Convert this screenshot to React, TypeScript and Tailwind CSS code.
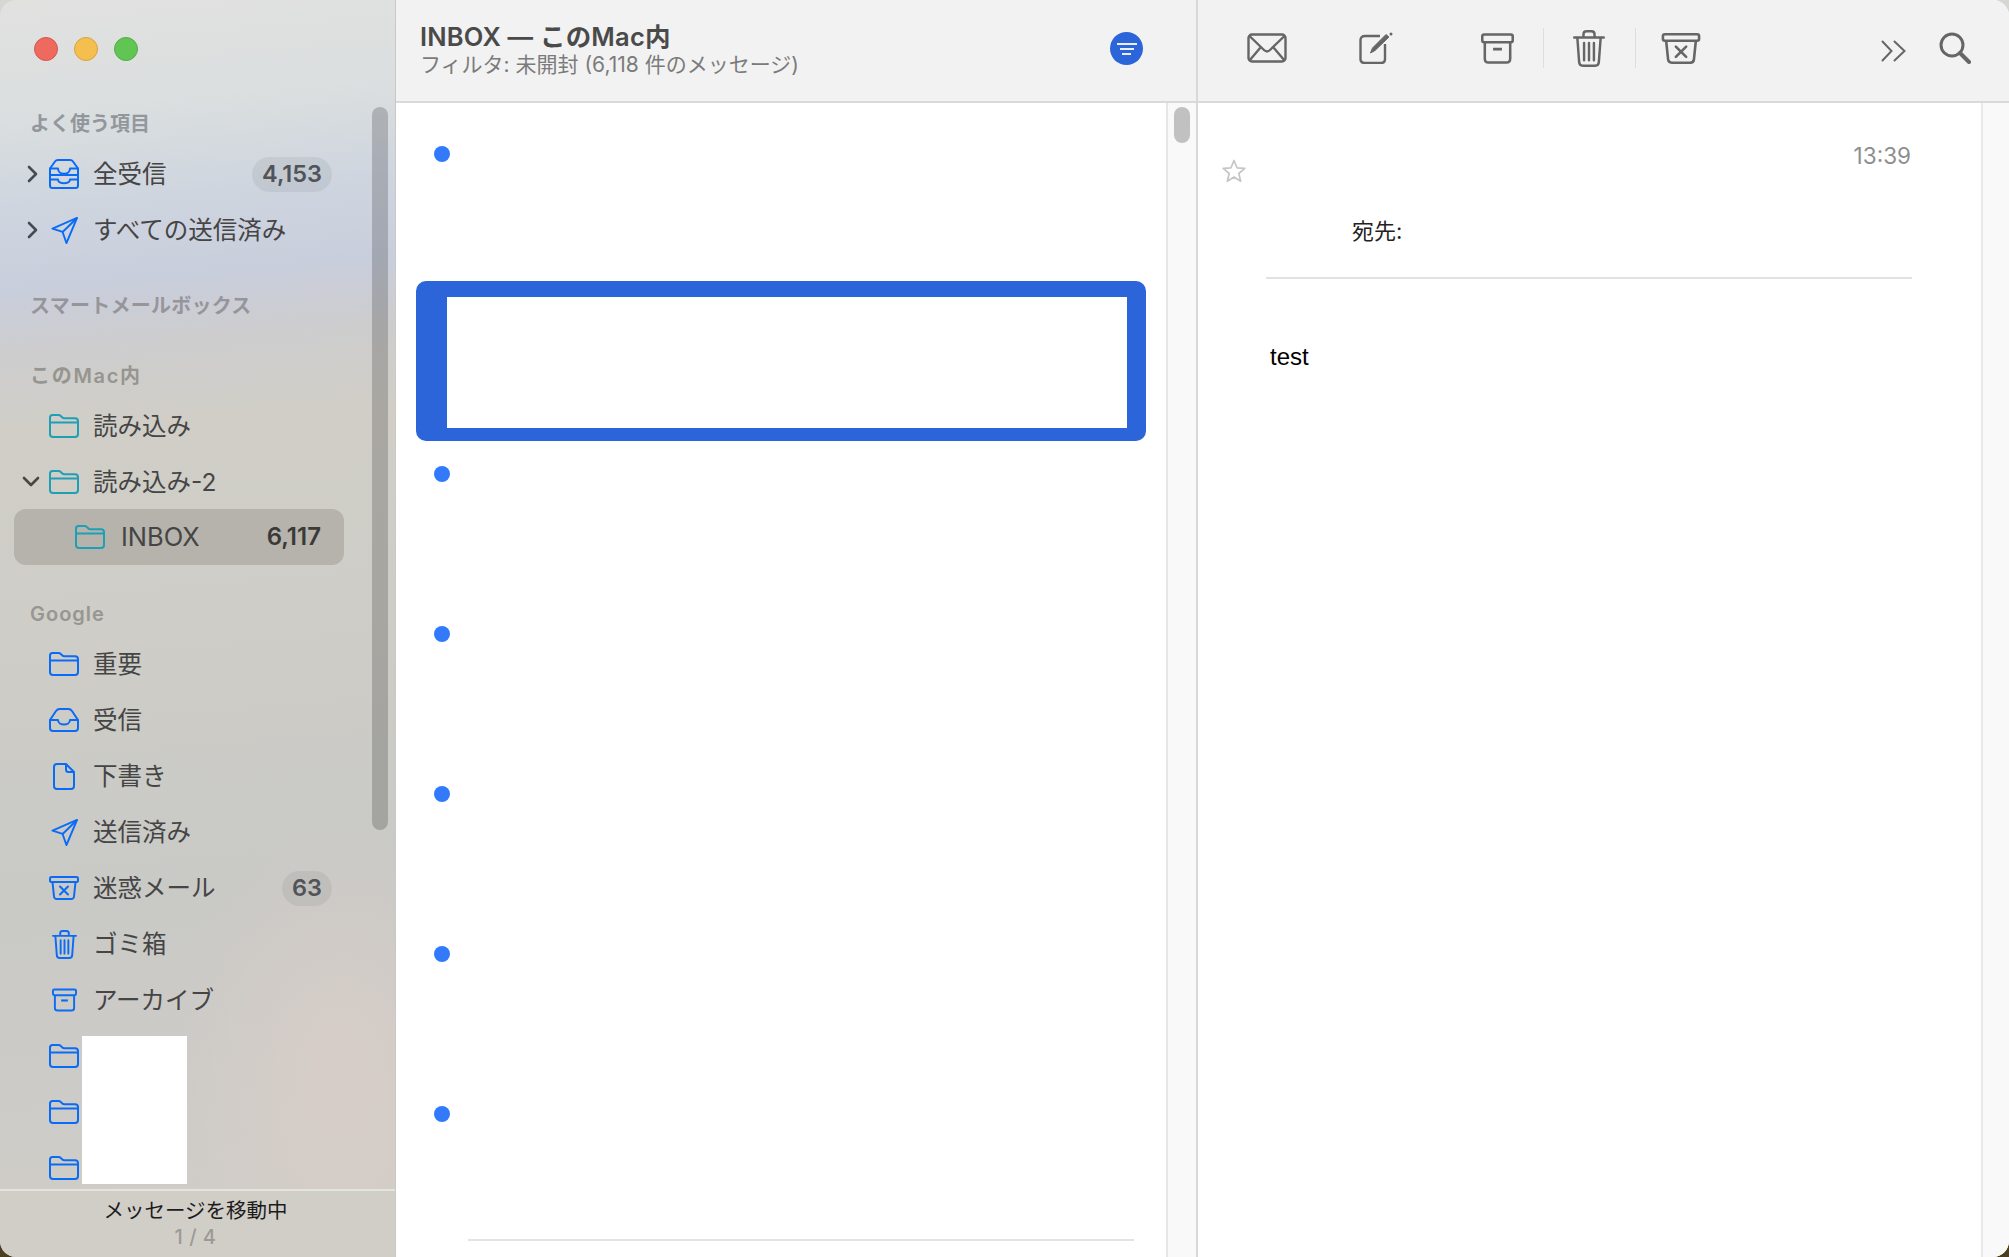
import { ReactNode } from 'react';

const FONT = "font-['Inter','Noto_Sans_CJK_JP',sans-serif]";

function Folder({ className }: { className: string }) {
  return (
    <svg viewBox="0 0 30 24" className={`h-[24px] w-[30px] ${className}`} fill="none" stroke="currentColor" strokeWidth="2">
      <path d="M1 5V3.500C1 2 2 1 3.500 1h6c1 0 1.600.3 2.300 1l1.700 1.600c.5.4 1 .6 1.700.6H26c1.900 0 3 1 3 3V20c0 2-1.100 3-3 3H4c-2 0-3-1-3-3V5Z" strokeLinejoin="round" />
      <path d="M1 8.500h28" />
    </svg>
  );
}

function AllInbox() {
  return (
    <svg viewBox="0 0 30 30" className="h-[30px] w-[30px] text-[#0a6cf5]" fill="none" stroke="currentColor" strokeWidth="2" strokeLinejoin="round">
      <path d="M1 9.500 6 2.500C6.700 1.500 7.500 1 8.800 1h12.400c1.300 0 2.100.5 2.800 1.500l5 7" />
      <path d="M1 9.500h8c0 7 12 7 12 0h8v6.500H1V9.500Z" />
      <path d="M1 16v10.500C1 28 2 29 3.500 29h23c1.500 0 2.500-1 2.500-2.500V16" />
      <path d="M1 20.500h8c0 5 12 5 12 0h8" />
    </svg>
  );
}

function Tray() {
  return (
    <svg viewBox="0 0 30 24" className="h-[24px] w-[30px] text-[#0a6cf5]" fill="none" stroke="currentColor" strokeWidth="2" strokeLinejoin="round">
      <path d="M1 12 7 3C8 1.600 9 1 10.500 1h9c1.500 0 2.500.6 3.500 2l6 9" />
      <path d="M1 12h8c0 6 12 6 12 0h8v8c0 2-1 3-3 3H4c-2 0-3-1-3-3v-8Z" />
    </svg>
  );
}

function Send({ className = 'text-[#0a6cf5]' }: { className?: string }) {
  return (
    <svg viewBox="0 0 28 28" className={`h-[27px] w-[27px] ${className}`} fill="none" stroke="currentColor" strokeWidth="2" strokeLinejoin="round">
      <path d="M27 1 1.500 12 12 15.500 16 27 27 1Z" />
      <path d="M27 1 12 15.500" />
    </svg>
  );
}

function Doc() {
  return (
    <svg viewBox="0 0 22 27" className="h-[27px] w-[22px] text-[#0a6cf5]" fill="none" stroke="currentColor" strokeWidth="2" strokeLinejoin="round">
      <path d="M13 1H4C2 1 1 2 1 4v19c0 2 1 3 3 3h14c2 0 3-1 3-3V9l-8-8Z" />
      <path d="M13 1v5.500c0 1.800.8 2.500 2.500 2.500H21" />
    </svg>
  );
}

function JunkIcon({ className }: { className: string }) {
  return (
    <svg viewBox="0 0 30 24" className={className} fill="none" stroke="currentColor" strokeWidth="2" strokeLinejoin="round">
      <rect x="1" y="1" width="28" height="5" rx="1.500" />
      <path d="M3.500 6 5 20.500C5.200 22.200 6 23 7.800 23h14.400c1.800 0 2.600-.8 2.800-2.500L26.500 6" />
      <path d="m11 10.500 8 8M19 10.500l-8 8" strokeLinecap="round" />
    </svg>
  );
}

function TrashIcon({ className }: { className: string }) {
  return (
    <svg viewBox="0 0 26 30" className={className} fill="none" stroke="currentColor" strokeWidth="2" strokeLinejoin="round">
      <path d="M1 6h24" strokeLinecap="round" />
      <path d="M8.500 6V3.500C8.500 2 9.500 1 11 1h4c1.500 0 2.500 1 2.500 2.500V6" />
      <path d="M3.500 6 5 26c.1 1.900 1 3 3 3h10c2 0 2.900-1.100 3-3L22.500 6" />
      <path d="M9 10.500v14M13 10.500v14M17 10.500v14" strokeLinecap="round" />
    </svg>
  );
}

function ArchiveIcon({ className }: { className: string }) {
  return (
    <svg viewBox="0 0 26 24" className={className} fill="none" stroke="currentColor" strokeWidth="2" strokeLinejoin="round">
      <rect x="1" y="1" width="24" height="6" rx="1.500" />
      <path d="M3 7v13c0 2 1 3 3 3h14c2 0 3-1 3-3V7" />
      <path d="M9.500 12.500h7" strokeWidth="2.200" />
    </svg>
  );
}

function Row({ icon, label, arrow, badge, plain, indent }: { icon: ReactNode; label: string; arrow?: 'right' | 'down'; badge?: string; plain?: string; indent?: boolean }) {
  return (
    <div className={`flex h-[56px] items-center pr-[63px] leading-[30px] text-[#454545] ${indent ? 'pl-[75px] text-[25.5px]' : 'pl-[49px] text-[24.5px]'}`}>
      <div className="relative flex w-[30px] shrink-0 justify-center">
        {arrow === 'right' && (
          <svg viewBox="0 0 12 18" className="absolute left-[-22px] top-1/2 h-[18px] w-[12px] -translate-y-1/2 text-[#474a50]" fill="none" stroke="currentColor" strokeWidth="2.600" strokeLinecap="round" strokeLinejoin="round">
            <path d="m2 2 7 7-7 7" />
          </svg>
        )}
        {arrow === 'down' && (
          <svg viewBox="0 0 18 12" className="absolute left-[-27px] top-1/2 h-[12px] w-[18px] -translate-y-1/2 text-[#474744]" fill="none" stroke="currentColor" strokeWidth="2.600" strokeLinecap="round" strokeLinejoin="round">
            <path d="m2 2 7 7 7-7" />
          </svg>
        )}
        {icon}
      </div>
      <span className={`flex-1 whitespace-nowrap ${indent ? 'ml-[16px]' : 'ml-[14px]'}`}>{label}</span>
      {badge && (
        <span className="flex h-[35px] items-center rounded-full bg-[#0000000f] px-[10px] text-[23.5px] font-semibold text-[#50535a]">{badge}</span>
      )}
      {plain && <span className="mr-[11px] text-[24px] font-semibold text-[#3b3a37]">{plain}</span>}
    </div>
  );
}

function Heading({ text, className }: { text: string; className: string }) {
  return <div className={`pl-[30px] text-[20px] font-semibold leading-[28px] ${className}`}>{text}</div>;
}

const blueFolder = <Folder className="text-[#0a6cf5]" />;
const tealFolder = <Folder className="text-[#1f9fb4]" />;

function Sidebar() {
  return (
    <aside className="relative flex w-[396px] shrink-0 flex-col border-r border-[#c9c8c2] bg-[radial-gradient(ellipse_170px_260px_at_340px_1080px,#d7cdc8,transparent),linear-gradient(175deg,#e1e1e0_0px,#dbdfdf_110px,#cfd5df_210px,#c9cedc_290px,#cdcdcf_350px,#d0cec7_430px,#cecdc7_640px,#c9c9c6_900px,#d0cdc8_1257px)]">
      {/* traffic lights */}
      <div className="flex h-[110px] shrink-0 gap-[16px] pl-[34px] pt-[37px]">
        <span className="h-[24px] w-[24px] rounded-full border border-[#d9544b] bg-[#ee6a5f]" />
        <span className="h-[24px] w-[24px] rounded-full border border-[#d9a23e] bg-[#f5bf4f]" />
        <span className="h-[24px] w-[24px] rounded-full border border-[#4fae47] bg-[#61c554]" />
      </div>

      <Heading text="よく使う項目" className="text-[#92979d]" />
      <div className="mt-[8px]">
        <Row icon={<AllInbox />} label="全受信" arrow="right" badge="4,153" />
        <Row icon={<Send />} label="すべての送信済み" arrow="right" />
      </div>

      <Heading text="スマートメールボックス" className="mt-[34px] tracking-[0.25px] text-[#95959a]" />
      <Heading text="このMac内" className="mt-[42px] tracking-[1.7px] text-[#96958f]" />
      <div className="mt-[8px]">
        <Row icon={tealFolder} label="読み込み" />
        <Row icon={tealFolder} label="読み込み-2" arrow="down" />
        <div className="-mt-[1px] ml-[14px] mr-[51px] rounded-[12px] bg-[#b5b3ac]">
          <div className="-ml-[14px] -mr-[51px]">
            <Row icon={tealFolder} label="INBOX" plain="6,117" indent />
          </div>
        </div>
      </div>

      <Heading text="Google" className="mt-[35px] tracking-[1px] text-[#979692]" />
      <div className="mt-[8px]">
        <Row icon={blueFolder} label="重要" />
        <Row icon={<Tray />} label="受信" />
        <Row icon={<Doc />} label="下書き" />
        <Row icon={<Send />} label="送信済み" />
        <Row icon={<JunkIcon className="h-[24px] w-[30px] text-[#0a6cf5]" />} label="迷惑メール" badge="63" />
        <Row icon={<TrashIcon className="h-[29px] w-[25px] text-[#0a6cf5]" />} label="ゴミ箱" />
        <Row icon={<ArchiveIcon className="h-[24px] w-[25px] text-[#0a6cf5]" />} label="アーカイブ" />
        <Row icon={blueFolder} label="" />
        <Row icon={blueFolder} label="" />
        <Row icon={blueFolder} label="" />
      </div>

      {/* scrollbar + redaction block over the list */}
      <div className="absolute left-[372px] top-[107px] h-[723px] w-[16px] rounded-full bg-[#00000030]" />
      <div className="absolute left-[82px] top-[1036px] h-[148px] w-[105px] bg-white" />

      {/* activity footer */}
      <div className="absolute inset-x-0 bottom-0 h-[68px] border-t-2 border-[#e5e3df] bg-[#d1cec8] pr-[4px] text-center">
        <div className="pt-[6px] text-[20.5px] leading-[28px] text-[#1c1c1c]">メッセージを移動中</div>
        <div className="text-[20px] leading-[25px] font-medium tracking-[0.5px] text-[#9c9a96]">1 / 4</div>
      </div>
    </aside>
  );
}

function MessageRow({ selected }: { selected?: boolean }) {
  if (selected) {
    return (
      <div className="ml-[20px] mr-[20px] h-[160px] rounded-[10px] bg-[#2b65d9] pb-[13px] pl-[31px] pr-[19px] pt-[16px]">
        <div className="h-full bg-white" />
      </div>
    );
  }
  return (
    <div className="h-[160px] pl-[38px] pt-[25px]">
      <div className="h-[16px] w-[16px] rounded-full bg-[#327afa]" />
    </div>
  );
}

function MessageList() {
  return (
    <section className="flex w-[802px] shrink-0 flex-col border-r-2 border-[#d8d8d8] bg-white">
      <header className="flex h-[103px] shrink-0 items-center justify-between border-b-2 border-[#d9d9d9] bg-[#f2f2f2] pl-[24px] pr-[53px]">
        <div className="mb-[2px]">
          <div className="text-[25.5px] font-semibold leading-[30px] tracking-[0.2px] text-[#4a4a4a]">INBOX — このMac内</div>
          <div className="text-[21px] leading-[26px] text-[#7b7b7b]">フィルタ: 未開封 (6,118 件のメッセージ)</div>
        </div>
        <div className="mb-[4px] flex h-[33px] w-[33px] flex-col items-center justify-center gap-[3px] rounded-full bg-[#2b65d9]">
          <span className="h-[2px] w-[20px] bg-[#e8eefb]" />
          <span className="h-[2px] w-[14px] bg-[#e8eefb]" />
          <span className="h-[2px] w-[9px] bg-[#e8eefb]" />
        </div>
      </header>
      <div className="flex min-h-0 flex-1">
        <div className="relative flex-1 overflow-hidden pt-[18px]">
          <MessageRow />
          <MessageRow selected />
          <MessageRow />
          <MessageRow />
          <MessageRow />
          <MessageRow />
          <MessageRow />
          <div className="absolute left-[72px] top-[1136px] h-[2px] w-[666px] bg-[#e3e3e3]" />
        </div>
        <div className="w-[30px] shrink-0 border-l-2 border-[#e6e6e6] bg-[#f9f9f9] pl-[6px] pt-[4px]">
          <div className="h-[36px] w-[16px] rounded-full bg-[#c1c1c1]" />
        </div>
      </div>
    </section>
  );
}

function Toolbar() {
  const cls = 'text-[#666666]';
  return (
    <header className="flex h-[103px] shrink-0 items-center border-b-2 border-[#d9d9d9] bg-[#f2f2f2] pb-[5px] pl-[49px]">
      <svg viewBox="0 0 40 30" className={`h-[30px] w-[40px] ${cls}`} fill="none" stroke="currentColor" strokeWidth="2.400" strokeLinejoin="round">
        <rect x="1.500" y="1.500" width="37" height="27" rx="3.500" />
        <path d="m2.500 3 14.500 14c1.800 1.700 4.200 1.700 6 0L37.500 3M2.500 27.500l11-13M37.500 27.500l-11-13" />
      </svg>
      <svg viewBox="0 0 34 32" className={`ml-[72px] h-[32px] w-[34px] ${cls}`} fill="none" stroke="currentColor" strokeWidth="2.400" strokeLinejoin="round">
        <path d="M21 4H6C3 4 1.500 5.500 1.500 8v19c0 2.500 1.500 4 4.500 4h16c2.700 0 4-1.500 4-4V12" />
        <path d="m11.500 21 2-5L27 2.500 30 5 16 18.500l-4.500 2.500Z" fill="currentColor" strokeWidth="1" />
        <circle cx="32" cy="2" r="1.500" fill="currentColor" stroke="none" />
      </svg>
      <ArchiveIcon className={`ml-[88px] h-[31px] w-[33px] ${cls}`} />
      <div className="ml-[29px] h-[40px] w-[1px] bg-[#dedede]" />
      <TrashIcon className={`ml-[29px] h-[37px] w-[32px] ${cls}`} />
      <div className="ml-[30px] h-[40px] w-[1px] bg-[#dedede]" />
      <JunkIcon className={`ml-[25px] h-[31px] w-[40px] ${cls}`} />
      <svg viewBox="0 0 25 22" className={`ml-[180px] mt-[6px] h-[22px] w-[25px] ${cls}`} fill="none" stroke="currentColor" strokeWidth="2" strokeLinecap="round">
        <path d="m1.500 1.500 9 9.500-9 9.500M13.500 1.500l10 9.500-10 9.500" />
      </svg>
      <svg viewBox="0 0 32 32" className={`ml-[33px] h-[32px] w-[32px] ${cls}`} fill="none" stroke="currentColor" strokeLinecap="round">
        <circle cx="13" cy="13" r="11" strokeWidth="3" />
        <path d="m21 21 9 9" strokeWidth="4" />
      </svg>
    </header>
  );
}

function Detail() {
  return (
    <section className="flex min-w-0 flex-1 flex-col bg-white">
      <Toolbar />
      <div className="flex min-h-0 flex-1">
        <div className="flex-1 pl-[24px] pr-[69px] pt-[38px]">
          <div className="flex justify-between">
            <svg viewBox="0 0 24 24" className="mt-[18px] h-[24px] w-[24px] text-[#c6c6c6]" fill="none" stroke="currentColor" strokeWidth="1.700" strokeLinejoin="round">
              <path d="m12 1.500 3 7.300 7.800.6-6 5.100 1.900 7.700L12 18.100l-6.700 4.100 1.900-7.700-6-5.100 7.800-.6 3-7.300Z" />
            </svg>
            <span className="mr-[1px] text-[22.5px] leading-[30px] text-[#8e8e8e]">13:39</span>
          </div>
          <div className="ml-[130px] mt-[34px] text-[22px] leading-[28px] text-[#222222]">宛先:</div>
          <div className="ml-[44px] mt-[32px] h-[2px] bg-[#e2e2e2]" />
          <div className="ml-[48px] mt-[63px] font-['Liberation_Sans',sans-serif] text-[24px] leading-[30px] text-black">test</div>
        </div>
        <div className="w-[28px] shrink-0 border-l-2 border-[#e9e9e9] bg-[#f9f9f9]" />
      </div>
    </section>
  );
}

export default function App() {
  return (
    <div className={`h-[1257px] w-[2009px] overflow-hidden bg-[linear-gradient(#d6d6d2_50%,#4a3f20_50%)] ${FONT}`}>
      <div className="flex h-full overflow-hidden rounded-[16px]">
        <Sidebar />
        <MessageList />
        <Detail />
      </div>
    </div>
  );
}
